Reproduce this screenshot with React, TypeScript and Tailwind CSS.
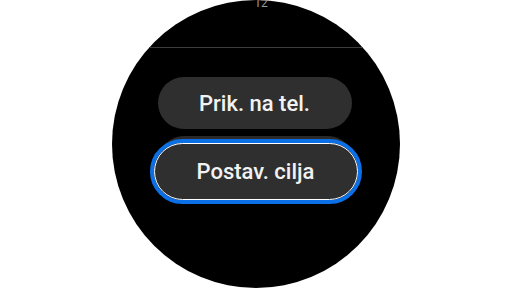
export default function App() {
  return (
    <div className="w-[511px] h-[288px] bg-white overflow-hidden" style={{ fontFamily: 'Roboto, "Noto Sans", sans-serif' }}>
      <div className="mx-auto w-[288px] h-[288px] rounded-full bg-black overflow-hidden flex flex-col items-center">
        {/* Clock */}
        <div className="-mt-[2px] text-[12px] leading-[11px] text-[#9a9a9a] pl-[11px]">12</div>
        <div className="mt-[38px] w-full h-px bg-[#3c3c3c]" />

        {/* Buttons */}
        <div className="mt-[29px] w-[194px] h-[52px] rounded-full bg-[#2f2f2f] flex items-center justify-center text-[22px] font-medium text-[#f2f2f2] -ml-[2px]">
          Prik. na tel.
        </div>

        <div className="relative mt-[10px] w-[212px] h-[65px]">
          <div className="absolute left-[8px] right-[8px] -top-[3px] h-[52px] rounded-full bg-[#2a2a2a]" />
          <div className="relative h-full rounded-full border-4 border-[#0b6fe6]">
            <div className="h-full rounded-full border border-white bg-[#2f2f2f] flex items-center justify-center text-[22px] font-medium text-[#f2f2f2]">
              Postav. cilja
            </div>
          </div>
        </div>
      </div>
    </div>
  );
}
